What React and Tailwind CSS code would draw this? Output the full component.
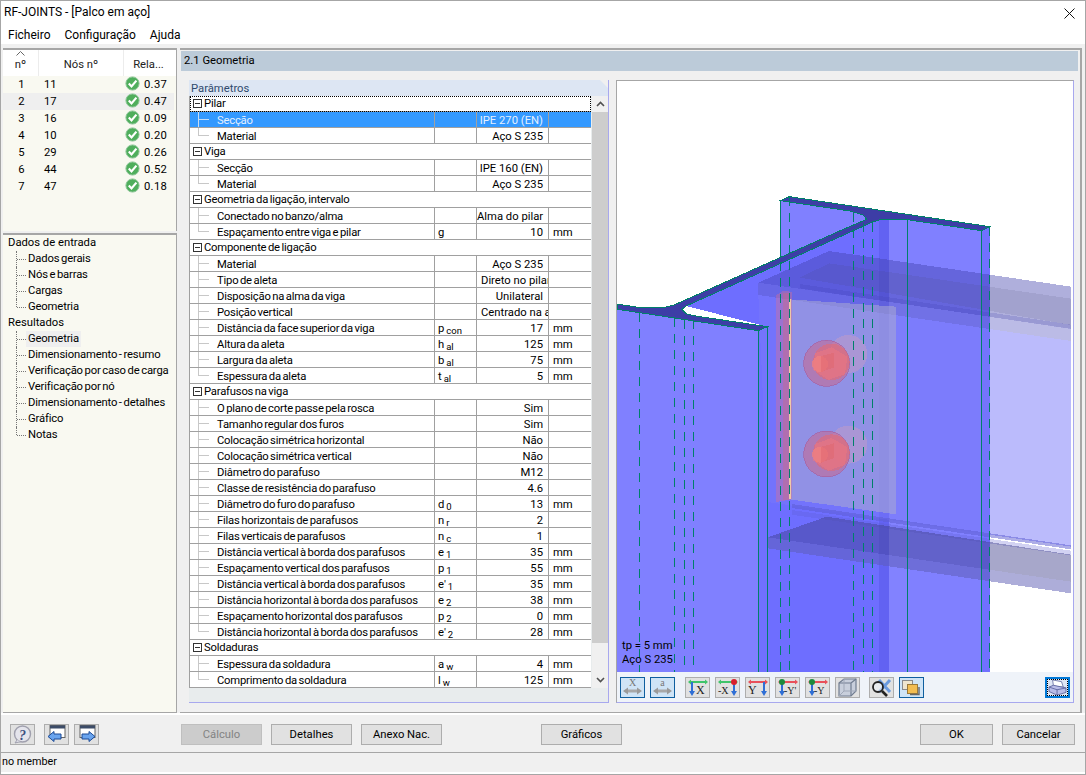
import React from "react"

const G = (name) => ({ group: name })
const rows = [
  G("Pilar"),
  { n: "Secção", v: "IPE 270 (EN)", sel: true },
  { n: "Material", v: "Aço S 235", last: true },
  G("Viga"),
  { n: "Secção", v: "IPE 160 (EN)" },
  { n: "Material", v: "Aço S 235", last: true },
  G("Geometria da ligação, intervalo"),
  { n: "Conectado no banzo/alma", v: "Alma do pilar" },
  { n: "Espaçamento entre viga e pilar", s: "g", v: "10", u: "mm", last: true },
  G("Componente de ligação"),
  { n: "Material", v: "Aço S 235" },
  { n: "Tipo de aleta", v: "Direto no pilar" },
  { n: "Disposição na alma da viga", v: "Unilateral" },
  { n: "Posição vertical", v: "Centrado na alma" },
  { n: "Distância da face superior da viga", s: "p", b: "con", v: "17", u: "mm" },
  { n: "Altura da aleta", s: "h", b: "al", v: "125", u: "mm" },
  { n: "Largura da aleta", s: "b", b: "al", v: "75", u: "mm" },
  { n: "Espessura da aleta", s: "t", b: "al", v: "5", u: "mm", last: true },
  G("Parafusos na viga"),
  { n: "O plano de corte passe pela rosca", v: "Sim" },
  { n: "Tamanho regular dos furos", v: "Sim" },
  { n: "Colocação simétrica horizontal", v: "Não" },
  { n: "Colocação simétrica vertical", v: "Não" },
  { n: "Diâmetro do parafuso", v: "M12" },
  { n: "Classe de resistência do parafuso", v: "4.6" },
  { n: "Diâmetro do furo do parafuso", s: "d", b: "0", v: "13", u: "mm" },
  { n: "Filas horizontais de parafusos", s: "n", b: "r", v: "2" },
  { n: "Filas verticais de parafusos", s: "n", b: "c", v: "1" },
  { n: "Distância vertical à borda dos parafusos", s: "e", b: "1", v: "35", u: "mm" },
  { n: "Espaçamento vertical dos parafusos", s: "p", b: "1", v: "55", u: "mm" },
  { n: "Distância vertical à borda dos parafusos", s: "e'", b: "1", v: "35", u: "mm" },
  { n: "Distância horizontal à borda dos parafusos", s: "e", b: "2", v: "38", u: "mm" },
  { n: "Espaçamento horizontal dos parafusos", s: "p", b: "2", v: "0", u: "mm" },
  { n: "Distância horizontal à borda dos parafusos", s: "e'", b: "2", v: "28", u: "mm", last: true },
  G("Soldaduras"),
  { n: "Espessura da soldadura", s: "a", b: "w", v: "4", u: "mm" },
  { n: "Comprimento da soldadura", s: "l", b: "w", v: "125", u: "mm", last: true },
]

const nodes = [
  ["1", "11", "0.37"],
  ["2", "17", "0.47"],
  ["3", "16", "0.09"],
  ["4", "10", "0.20"],
  ["5", "29", "0.26"],
  ["6", "44", "0.52"],
  ["7", "47", "0.18"],
]

const CheckIcon = () => (
  <svg width="15" height="15" viewBox="0 0 15 15" className="-mt-[3px] shrink-0">
    <circle cx="7.5" cy="7.5" r="6.6" fill="#4fae5c" stroke="#8fc79a" strokeWidth="1" />
    <path d="M3.8 7.6 L6.5 10.4 L11.4 4.6" fill="none" stroke="#fff" strokeWidth="2.2" />
  </svg>
)

function TreeItem({ label, last, active }) {
  return (
    <div className="relative flex h-4 items-center whitespace-nowrap pl-[23px]">
      <div className={`absolute left-[13px] top-0 border-l border-dotted border-[#777] ${last ? "h-2" : "h-4"}`} />
      <div className="absolute left-[14px] top-2 w-[9px] border-t border-dotted border-[#777]" />
      <span className={`px-[2px] leading-4 tracking-[-0.15px] [word-spacing:-1px] ${active ? "bg-[#efefef]" : ""}`}>{label}</span>
    </div>
  )
}

function ParamRow({ r }) {
  if (r.group) {
    return (
      <div className={`flex h-4 items-center whitespace-nowrap border-b border-[#a0a0a0] pl-[3px] ${r.group === "Pilar" ? "outline-1 -outline-offset-1 outline-dotted outline-black" : ""}`}>
        <span className="relative mr-[2px] h-[9px] w-[9px] shrink-0 border border-[#333] bg-white">
          <span className="absolute left-px top-[3px] h-px w-[5px] bg-[#333]" />
        </span>
        <span className="leading-[17px] tracking-[-0.2px] [word-spacing:-1px]">{r.group}</span>
      </div>
    )
  }
  const sel = r.sel
  const line = sel ? "border-[#c8ddf5]" : "border-[#c8c8c8]"
  return (
    <div className={`flex h-4 whitespace-nowrap border-b border-[#a0a0a0] leading-[17px] ${sel ? "bg-[#3399ff] text-[#e4f0ff]" : ""}`}>
      <div className="relative w-[245px] shrink-0 overflow-hidden border-r border-[#a0a0a0] pl-[27px] tracking-[-0.2px] [word-spacing:-1px]">
        <div className={`absolute left-[8px] top-0 border-l ${line} ${r.last ? "h-2" : "h-[15px]"}`} />
        <div className={`absolute left-[8px] top-[7px] w-[11px] border-t ${line}`} />
        {r.n}
      </div>
      <div className="h-[15px] w-[42px] shrink-0 overflow-hidden border-r border-[#a0a0a0] pl-[3px]">
        {r.s}
        {r.b && <span className="relative top-[2px] ml-[2px] text-[9.5px] leading-none">{r.b}</span>}
      </div>
      <div className="w-[72px] shrink-0 overflow-hidden border-r border-[#a0a0a0] pr-[5px]">
        <div className={r.v.length > 13 ? "pl-[4px] text-left" : "text-right"}>{r.v}</div>
      </div>
      <div className="w-[42px] shrink-0 pl-[4px]">{r.u}</div>
    </div>
  )
}

function Axis({ letter, top = "#3fc46a", tip = "#3fc46a", dot, side = "left", small }) {
  const vx = side === "left" ? 6 : 18
  return (
    <svg width="23" height="19" viewBox="0 0 23 19">
      <path d="M5 4 H19" stroke={top} strokeWidth="2" />
      <path d="M19 1.5 L22 4 L19 6.5 Z" fill={tip} />
      <path d="M2 4 L5 1.5 V6.5 Z" fill={tip} />
      <path d={`M${vx} 4 V15`} stroke="#2f6fd6" strokeWidth="2" />
      <path d={`M${vx - 3} 13 H${vx + 3} L${vx} 18 Z`} fill="#2f6fd6" />
      {dot && <circle cx={side === "left" ? 6 : 18} cy="4" r="3" fill={dot} />}
      <text x={side === "left" ? (small ? 8 : 10) : 2} y="16" fontSize={small ? 10 : 12} fontFamily="Liberation Serif, serif" fill="#222">{letter}</text>
    </svg>
  )
}

const Measure = ({ ch }) => (
  <svg width="23" height="19" viewBox="0 0 23 19">
    <text x="11.5" y="8" textAnchor="middle" fontSize="10" fontFamily="Liberation Serif, serif" fill="#777">{ch}</text>
    <path d="M5 13 H18" stroke="#a8a8a8" strokeWidth="3" />
    <path d="M7 9.5 L2 13 L7 16.5 Z M16 9.5 L21 13 L16 16.5 Z" fill="#9a9a9a" />
  </svg>
)

const Cube = () => (
  <svg width="23" height="19" viewBox="0 0 23 19">
    <path d="M3 5 L8 1 H20 V13 L15 18 H3 Z" fill="#c8cfdc" stroke="#707c90" strokeWidth="1.2" />
    <path d="M3 5 H15 V18 M15 5 L20 1" fill="none" stroke="#707c90" strokeWidth="1.2" />
    <path d="M8 1 V13 H20 M8 13 L3 18" fill="none" stroke="#a0a8b8" strokeWidth="1" />
  </svg>
)

const ZoomX = () => (
  <svg width="23" height="19" viewBox="0 0 23 19">
    <path d="M9 2 L20 14 M20 2 L9 14" stroke="#6a9ae0" strokeWidth="3" />
    <circle cx="8" cy="9" r="5" fill="#eef3f8" fillOpacity="0.6" stroke="#222" strokeWidth="1.8" />
    <path d="M12 13 L17 18" stroke="#222" strokeWidth="2.6" />
  </svg>
)

const Layers = () => (
  <svg width="23" height="19" viewBox="0 0 23 19">
    <rect x="2.5" y="2.5" width="10" height="9" fill="#efe6cf" stroke="#8a8a8a" />
    <rect x="7.5" y="6.5" width="10" height="9" fill="#f2bd52" stroke="#9a7a3a" />
    <path d="M10 16.5 H19 V9" fill="none" stroke="#666" strokeWidth="1.4" />
  </svg>
)

const Printer = () => (
  <svg width="21" height="17" viewBox="0 0 23 19">
    <path d="M6 1 L16 3 L18 9 L7 8 Z" fill="#fff" stroke="#7078a8" />
    <path d="M2 9 L7 7 L21 10 V15 L11 18 L2 14 Z" fill="#b9bce8" stroke="#5f66a0" />
    <path d="M2 9 L11 12 V18 M11 12 L21 10" fill="none" stroke="#5f66a0" />
  </svg>
)

const ToolBtn = ({ active, focus, className = "", children }) => (
  <div
    className={`flex h-[21px] w-[25px] shrink-0 items-center justify-center ${
      focus
        ? "border-2 border-[#0078d7] bg-[#dfe6f5] outline-1 -outline-offset-3 outline-dotted outline-black"
        : active
          ? "border border-[#0f5f9f] bg-[#cfe4f6]"
          : "border border-[#adadad] bg-[#e1e1e1]"
    } ${className}`}
  >
    {children}
  </div>
)

const Btn = ({ disabled, className = "", children }) => (
  <div
    className={`flex h-[21px] items-center justify-center border pt-px ${
      disabled ? "border-[#bfbfbf] bg-[#cccccc] text-[#838383]" : "border-[#adadad] bg-[#e1e1e1]"
    } ${className}`}
  >
    {children}
  </div>
)

const Help = () => (
  <svg width="21" height="19" viewBox="0 0 21 19">
    <circle cx="10.5" cy="9" r="8" fill="#e4e4ec" stroke="#a0a0ae" strokeWidth="1.4" />
    <path d="M5 15 L3 18 L9 16.5" fill="#e4e4ec" stroke="#a0a0ae" />
    <text x="10.5" y="14.5" textAnchor="middle" fontSize="14" fontWeight="700" fontStyle="italic" fontFamily="Liberation Serif, serif" fill="#3d4f80">?</text>
  </svg>
)

const WinArrow = ({ flip }) => (
  <svg width="21" height="19" viewBox="0 0 21 19">
    <rect x="4" y="0.5" width="15" height="12" fill="#fff" stroke="#666" />
    <rect x="4" y="0.5" width="15" height="3" fill="#3c4c68" />
    <path
      d={flip ? "M6 9 H13 V6.5 L19 11.5 L13 16.5 V14 H6 Z" : "M15 9 H8 V6.5 L2 11.5 L8 16.5 V14 H15 Z"}
      fill="#6aa4ee"
      stroke="#1c4a96"
    />
  </svg>
)

const vline = (x, y1) => `M${x} ${y1} V1476`

const Bolt = ({ cy }) => (
  <g>
    <circle cx="715" cy={cy - 28} r="57" fill="#c09ac8" fillOpacity="0.55" />
    <circle cx="650" cy={cy} r="69" fill="#c8688e" fillOpacity="0.55" stroke="#a860a0" strokeWidth="2" />
    <circle cx="664" cy={cy - 4} r="55" fill="#e8686e" fillOpacity="0.55" />
    <path d={`M615 ${cy - 30} L665 ${cy - 48} L712 ${cy - 20} L705 ${cy + 32} L655 ${cy + 50} L610 ${cy + 20} Z`} fill="#f07880" fillOpacity="0.5" />
    <circle cx="630" cy={cy + 2} r="24" fill="#f08080" fillOpacity="0.75" />
    <path d={`M634 ${cy - 22} L672 ${cy - 32} V${cy + 12} L634 ${cy + 26} Z`} fill="#e0666e" fillOpacity="0.5" />
  </g>
)

// 3D view, drawn in 3x coordinates relative to (610,180)
const JointView = () => (
  <svg viewBox="21 -297 1362 1773" width="454" height="591" shapeRendering="crispEdges" className="block">
    <rect x="21" y="-297" width="1362" height="1773" fill="#fff" />
    {/* column */}
    <path d="M511 62 L538 50 L1139 140 V1476 H511 Z" fill="#8080ff" />
    <path d="M228 378 L790 120 L808 118 V1476 H472 V440 Z" fill="#6e6eff" />
    <path d="M808 118 H838 V1476 H808 Z" fill="#6262f2" />
    <path d="M838 118 H892 V1476 H838 Z" fill="#8282ff" />
    <path d="M1115 152 L1139 140 V1476 H1115 Z" fill="#7070ff" />
    <path d="M21 388 L445 452 V1476 H21 Z" fill="#8080ff" />
    <path d="M445 452 L472 440 V1476 H445 Z" fill="#7070ff" />

    {/* beam */}
    <path d="M445 345 L1383 483 V1100 L473 966 Z" fill="#7878fa" fillOpacity="0.5" />
    <path d="M445 308 L657 213 L1383 320 V446 Z" fill="#4040ab" fillOpacity="0.42" />
    <path d="M570 293 L657 250 L1383 356 V435 Z" fill="#46466e" fillOpacity="0.12" />
    <path d="M445 308 L1383 446 V483 L445 345 Z" fill="#5c5cc4" fillOpacity="0.42" />
    <path d="M570 312 L1383 434 V447 L570 325 Z" fill="#4040b0" fillOpacity="0.2" />

    {/* plate, weld, bolts */}
    <path d="M540 358 L858 380 V1003 L540 958 Z" fill="#aaaad2" fillOpacity="0.55" />
    <path d="M498 345 L522 332 L545 336 V958 L498 966 Z" fill="#d87090" fillOpacity="0.4" />
    <path d="M518 340 H536 V960 H518 Z" fill="#d06a80" fillOpacity="0.4" />
    <path d="M537 358 H544 V958 H537 Z" fill="#eec8a8" />
    <Bolt cy={550} />
    <Bolt cy={822} />

    {/* lower flange of the beam */}
    <path d="M545 972 L1383 1096 V1108 L545 984 Z" fill="#5c5cd0" fillOpacity="0.5" />
    <path d="M545 990 L1383 1112 V1126 L545 1004 Z" fill="#5c5cd0" fillOpacity="0.28" />
    <path d="M473 1072 L650 1010 L1383 1124 V1205 Z" fill="#40408c" fillOpacity="0.46" />
    <path d="M473 1072 L1383 1205 V1240 L473 1105 Z" fill="#5c5cb4" fillOpacity="0.5" />

    {/* section outline */}
    <path
      d="M511 62 L538 50 L1139 140 L1115 152 L885 118 L815 118 L790 125 L228 378 L215 388 L230 402 L250 407 L472 440 L445 452 L200 415 L90 398 L21 388 L21 372 L90 383 L160 383 L190 376 L512 232 L700 148 L770 118 L760 105 L720 93 L511 62 Z"
      fill="#3d3da6"
      stroke="#00806a"
      strokeWidth="1"
      vectorEffect="non-scaling-stroke"
    />

    {/* edges */}
    <g fill="none" stroke="#00806a" strokeWidth="1">
      <path d="M511 62 V232 M445 452 V1476 M472 440 V1476 M892 118 V1476 M1115 152 V1476" vectorEffect="non-scaling-stroke" />
      <path
        d={[vline(88, 398), vline(193, 415), vline(223, 420), vline(250, 420), vline(511, 245), vline(538, 50), vline(730, 100), vline(760, 130), vline(787, 130), vline(1139, 140)].join(" ")}
        strokeDasharray="9 7"
        vectorEffect="non-scaling-stroke"
      />
    </g>
  </svg>
)

export default function App() {
  return (
    <div
      className="relative flex h-[775px] w-[1086px] flex-col overflow-hidden border border-[#a6a6a6] bg-white text-[11.25px] text-black"
      style={{ fontFamily: "Roboto, 'Liberation Sans', sans-serif" }}
    >
      {/* title */}
      <div className="flex h-[21px] shrink-0 items-center justify-between pl-[3px] pr-[10px] text-[12px]">
        <span>RF-JOINTS - [Palco em aço]</span>
        <svg width="11" height="11" viewBox="0 0 11 11" className="mt-[4px]">
          <path d="M0.5 0.5 L10.5 10.5 M10.5 0.5 L0.5 10.5" stroke="#111" strokeWidth="1" />
        </svg>
      </div>
      {/* menu */}
      <div className="flex h-[22px] shrink-0 items-center gap-[14px] pl-[7px] pt-[4px] text-[12px]">
        <span>Ficheiro</span>
        <span>Configuração</span>
        <span>Ajuda</span>
      </div>

      {/* main */}
      <div className="flex h-[669px] shrink-0 bg-[#f0f0f0] pt-[4px]">
        <div className="ml-[2px] flex w-[174px] shrink-0 flex-col gap-[2px]">
          <div className="h-[183px] shrink-0 border-r border-t-2 border-[#a6a6a6] bg-[#f9f9f1]">
            <div className="flex h-[26px] bg-white text-[#222]">
              <div className="relative flex w-[36px] items-center justify-center border-r border-[#ececec] pt-[5px]">
                nº
                <svg width="9" height="5" viewBox="0 0 9 5" className="absolute left-[13px] top-px">
                  <path d="M0.5 4.5 L4.5 0.5 L8.5 4.5" fill="none" stroke="#666" />
                </svg>
              </div>
              <div className="flex w-[85px] items-center justify-center border-r border-[#ececec] pt-[5px]">Nós nº</div>
              <div className="flex w-[49px] items-center justify-center pt-[5px]">Rela...</div>
            </div>
            {nodes.map((n, i) => (
              <div key={n[0]} className={`flex h-[17px] w-[171px] items-center pt-px ${i === 1 ? "bg-[#efefef]" : ""}`}>
                <span className="w-[37px] text-center">{n[0]}</span>
                <span className="w-[85px] pl-[4px]">{n[1]}</span>
                <CheckIcon />
                <span className="ml-[4px] tracking-[0.3px]">{n[2]}</span>
              </div>
            ))}
          </div>
          <div className="flex-1 border-b border-r border-t-2 border-[#a6a6a6] bg-[#f9f9f1]">
            <div className="h-4 pl-[5px] leading-4">Dados de entrada</div>
            <TreeItem label="Dados gerais" />
            <TreeItem label="Nós e barras" />
            <TreeItem label="Cargas" />
            <TreeItem label="Geometria" last />
            <div className="h-4 pl-[5px] leading-4">Resultados</div>
            <TreeItem label="Geometria" active />
            <TreeItem label="Dimensionamento - resumo" />
            <TreeItem label="Verificação por caso de carga" />
            <TreeItem label="Verificação por nó" />
            <TreeItem label="Dimensionamento - detalhes" />
            <TreeItem label="Gráfico" />
            <TreeItem label="Notas" last />
          </div>
        </div>

        <div className="ml-[3px] flex w-[902px] shrink-0 flex-col border-b border-r-2 border-t-2 border-[#a6a6a6] pb-[9px]">
          <div className="ml-px mr-[2px] mt-px flex h-[20px] shrink-0 items-center bg-[#bccbd9] pl-[3px] pt-[1px]">2.1 Geometria</div>
          <div className="flex flex-1 pl-[9px] pt-[9px]">
            {/* parameters */}
            <div className="flex h-[623px] w-[420px] shrink-0 flex-col border-b border-r border-[#a8a8ee]">
              <div className="flex h-4 shrink-0 items-center bg-[#dde6f3] pl-[2px] pt-[3px] text-[#2f4a6d] [clip-path:polygon(0_0,calc(100%-8px)_0,100%_8px,100%_100%,0_100%)]">Parâmetros</div>
              <div className="flex flex-1 bg-[#e8eced]">
                <div className="h-[592px] w-[402px] shrink-0 border-l border-[#a0a0a0] bg-white">
                  {rows.map((r, i) => (
                    <ParamRow key={i} r={r} />
                  ))}
                </div>
                <div className="ml-px flex h-[592px] w-[16px] shrink-0 flex-col items-center justify-between bg-[#f0f0f0]">
                  <div className="flex h-4 items-center">
                    <svg width="9" height="6" viewBox="0 0 9 6"><path d="M1 5 L4.5 1.5 L8 5" fill="none" stroke="#505050" strokeWidth="1.6" /></svg>
                  </div>
                  <div className="w-full flex-1 bg-[#cdcdcd]" />
                  <div className="mt-[29px] flex h-4 items-center">
                    <svg width="9" height="6" viewBox="0 0 9 6"><path d="M1 1 L4.5 4.5 L8 1" fill="none" stroke="#505050" strokeWidth="1.6" /></svg>
                  </div>
                </div>
              </div>
            </div>

            {/* 3D view */}
            <div className="ml-[7px] flex h-[623px] w-[458px] shrink-0 flex-col border border-b-[#a8a8ee] border-l-[#a6a6a6] border-r-[#a8a8ee] border-t-[#a6a6a6] bg-white">
              <div className="relative h-[591px] shrink-0">
                <JointView />
                <div className="absolute left-[5px] top-[558px] leading-[14px]">
                  <div>tp = 5 mm</div>
                  <div>Aço S 235</div>
                </div>
              </div>
              <div className="flex flex-1 items-start bg-[#eff3f9] pl-[3px] pt-[5px]">
                <ToolBtn active><Measure ch="X" /></ToolBtn>
                <ToolBtn active className="ml-[5px]"><Measure ch="a" /></ToolBtn>
                <ToolBtn className="ml-[10px]"><Axis letter="X" /></ToolBtn>
                <ToolBtn className="ml-[5px]"><Axis letter="-X" side="right" dot="#d81e2c" small /></ToolBtn>
                <ToolBtn className="ml-[5px]"><Axis letter="Y" side="right" top="#e8505a" tip="#e8505a" /></ToolBtn>
                <ToolBtn className="ml-[5px]"><Axis letter="-Y'" top="#e8505a" tip="#e8505a" dot="#1e8a3c" small /></ToolBtn>
                <ToolBtn className="ml-[5px]"><Axis letter="-Y" top="#e8505a" tip="#e8505a" dot="#1e8a3c" small /></ToolBtn>
                <ToolBtn className="ml-[5px]"><Cube /></ToolBtn>
                <ToolBtn className="ml-[9px]"><ZoomX /></ToolBtn>
                <ToolBtn active className="ml-[5px]"><Layers /></ToolBtn>
                <ToolBtn active focus className="ml-[121px]"><Printer /></ToolBtn>
              </div>
            </div>
          </div>
        </div>
      </div>

      {/* footer */}
      <div className="flex h-[39px] shrink-0 items-start border-t-2 border-white bg-[#f0f0f0] pl-[9px] pt-[9px]">
        <ToolBtn><Help /></ToolBtn>
        <ToolBtn className="ml-[9px]"><WinArrow /></ToolBtn>
        <ToolBtn className="ml-[5px]"><WinArrow flip /></ToolBtn>
        <Btn disabled className="ml-[82px] w-[81px]">Cálculo</Btn>
        <Btn className="ml-[9px] w-[81px]">Detalhes</Btn>
        <Btn className="ml-[9px] w-[81px]">Anexo Nac.</Btn>
        <Btn className="ml-[99px] w-[81px]">Gráficos</Btn>
        <Btn className="ml-[298px] w-[73px]">OK</Btn>
        <Btn className="ml-[9px] w-[73px]">Cancelar</Btn>
      </div>
      <div className="h-[22px] shrink-0 border-b-2 border-t border-b-white border-t-[#a6a6a6] bg-[#f0f0f0] pl-px text-[10.8px] leading-[18px]">no member</div>
    </div>
  )
}
